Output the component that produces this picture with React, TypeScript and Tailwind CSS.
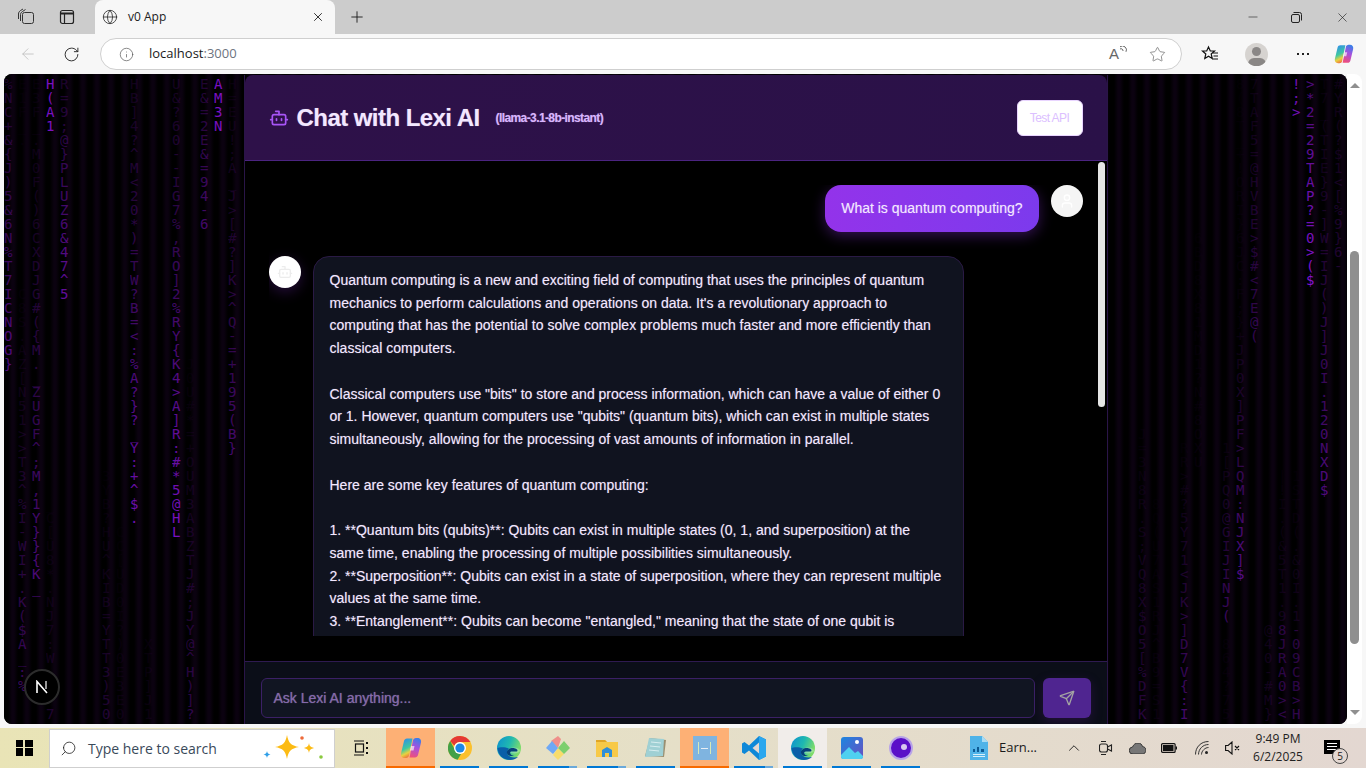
import { ArrowLeft, Bot, ChevronUp, Globe, Info, Minus, Plus, RotateCw, Search, Send, Star, User, X } from "lucide-react";

// [column, first row, characters, alpha at the top, alpha at the bottom]
type Trail = [number, number, string, number, number];

const trails: Trail[] = [
  [0, 0, "%NC+&{J)5&6N%T7ICNOG}", 0.28, 0.62],
  [1, 0, "E1F_.", 0.06, 0.08],
  [1, 15, "C8S.AZ[N51>>T3^%I-WI+.K($A_:%", 0.07, 0.5],
  [2, 0, "E3F_.M0F()6CXDJG#({M._ZUGF^;M,1Y}}{K_", 0.1, 0.62],
  [3, 0, "H(A1", 0.85, 0.85],
  [3, 30, "_C[U8*.NJ7:W", 0.08, 0.2],
  [3, 45, "7", 0.3, 0.3],
  [4, 0, "R=9;@}PLUZ6&47^5", 0.28, 0.72],
  [7, 28, "3YB?HU^KIB=YTT3)50", 0.06, 0.32],
  [8, 32, "CC[UD0I?)0E3E0", 0.05, 0.14],
  [9, 0, "HB]4?^M<20*)=TW?B=<:%A?}?_Y:+^$.", 0.2, 0.8],
  [10, 40, "XTP]J1", 0.1, 0.14],
  [12, 0, "U&?60--IG7%,RO]2%RY{K4>A]R:#*5@HL", 0.22, 0.85],
  [13, 20, "J0U#*=+OUM3ABZTJ#;JY@^H)]?", 0.06, 0.42],
  [14, 0, "E&=2E&=94-6", 0.32, 0.55],
  [15, 0, "AM3N", 0.85, 0.85],
  [16, 0, "H=EU!;A_J>[#?]K>^Q-=+195(B}", 0.12, 0.55],
  [81, 25, "J=3N8R.S;VQ8X$O5[%DFK", 0.08, 0.36],
  [82, 30, "8Q(U7AS1RJ^B9=S1", 0.05, 0.12],
  [84, 26, "RR>#?5Y71<JK>]D7V{:I", 0.06, 0.55],
  [85, 11, "6BD8X81MD1?N#8OXU", 0.05, 0.1],
  [87, 26, "1[PQ0@GIJINJ(", 0.12, 0.5],
  [87, 40, "864?75", 0.08, 0.1],
  [88, 0, "8(8T_+!ORI}6JC:F;}", 0.05, 0.1],
  [88, 18, "+JP0X]PF>LQM:NJX]$", 0.15, 0.65],
  [89, 0, "7TAF5=@HVBE>$#<7E@(", 0.14, 0.45],
  [90, 39, "@40-#M}", 0.18, 0.22],
  [91, 28, "|!I.(&5T1.9", 0.08, 0.2],
  [91, 39, "8JRA0><", 0.38, 0.42],
  [92, 0, "!;>", 0.8, 0.8],
  [92, 28, "1STD(.&0I.1", 0.06, 0.2],
  [92, 39, "-09CB>H", 0.38, 0.42],
  [93, 0, ">*2=29TAP?=0>($", 0.6, 0.9],
  [94, 0, "T7_(TIE}9-]W=IJ()J]J0I.120NXD$", 0.1, 0.62],
  [95, 0, "#YR(?$1<[%9}6-", 0.16, 0.32],
];

const Rain = () => (
  <div className="absolute inset-0 flex overflow-hidden bg-[repeating-linear-gradient(90deg,#000_0px,#000_4px,#0b0210_8px,#0b0210_10px,#000_14px)] pt-[3px] font-['DejaVu_Sans_Mono',monospace] text-[14px] leading-[14px]">
    {Array.from({ length: 96 }, (_, col) => {
      let row = 0;
      return (
        <div key={col} className="flex w-[14px] shrink-0 flex-col">
          {trails
            .filter((t) => t[0] === col)
            .map((t) => {
              const gap = t[1] - row;
              row = t[1] + t[2].length;
              return (
                <div key={t[1]} style={{ marginTop: gap * 14 }}>
                  {t[2].split("").map((c, i) => (
                    <div
                      key={i}
                      className="h-[14px]"
                      style={{
                        color: "#9a16f0",
                        opacity: Math.pow(t[3] + ((t[4] - t[3]) * i) / Math.max(t[2].length - 1, 1), 1.4),
                      }}
                    >
                      {c}
                    </div>
                  ))}
                </div>
              );
            })}
        </div>
      );
    })}
  </div>
);

const answer = `Quantum computing is a new and exciting field of computing that uses the principles of quantum mechanics to perform calculations and operations on data. It's a revolutionary approach to computing that has the potential to solve complex problems much faster and more efficiently than classical computers.

Classical computers use "bits" to store and process information, which can have a value of either 0 or 1. However, quantum computers use "qubits" (quantum bits), which can exist in multiple states simultaneously, allowing for the processing of vast amounts of information in parallel.

Here are some key features of quantum computing:

1. **Quantum bits (qubits)**: Qubits can exist in multiple states (0, 1, and superposition) at the same time, enabling the processing of multiple possibilities simultaneously.
2. **Superposition**: Qubits can exist in a state of superposition, where they can represent multiple values at the same time.
3. **Entanglement**: Qubits can become "entangled," meaning that the state of one qubit is`;

const ChatPanel = () => (
  <div className="relative z-10 mx-auto mt-px h-[700px] w-[864px] border-x border-[#2a1548] font-['Liberation_Sans',sans-serif] [text-shadow:0_0_1px_rgba(233,213,255,0.45)]">
    <div className="flex h-[86px] items-center justify-between rounded-t-lg border-b border-[#4b2480] bg-gradient-to-r from-[#2e1149] to-[#2a1148] px-6">
      <div className="flex items-center">
        <Bot size={20} strokeWidth={2} className="text-[#a855f7]" />
        <h1 className="ml-2 text-2xl font-bold tracking-[-0.55px] text-[#f3e8ff]">Chat with Lexi AI</h1>
        <span className="ml-4 text-xs font-bold tracking-[-0.6px] text-[#d8b4fe]">(llama-3.1-8b-instant)</span>
      </div>
      <button className="h-9 w-[66px] rounded-md border border-[#e9d5ff] bg-white text-xs tracking-[-0.55px] text-[#dcc0ff]">
        Test API
      </button>
    </div>

    <div className="relative flex h-[500px] flex-col bg-black px-6 pt-6 pb-[25px]">
      <div className="flex min-h-0 flex-1 flex-col gap-6 overflow-hidden">
        <div className="flex shrink-0 justify-end gap-3">
          <div className="rounded-2xl bg-gradient-to-r from-[#9333ea] to-[#7c3aed] px-4 py-3 text-sm leading-[22.75px] text-[#f3e8ff] shadow-[0_4px_14px_rgba(147,51,234,0.35)]">
            What is quantum computing?
          </div>
          <div className="flex h-8 w-8 items-center justify-center rounded-full bg-[#f5f5f5]">
            <User size={16} className="text-[#ffffff]" />
          </div>
        </div>
        <div className="flex shrink-0 gap-3">
          <div className="flex h-8 w-8 items-center justify-center rounded-full bg-white shadow-[0_4px_14px_rgba(147,51,234,0.25)]">
            <Bot size={16} className="text-[#ececec]" />
          </div>
          <div className="w-[651px] whitespace-pre-wrap rounded-2xl border border-[#2a1a45] bg-[#10131f] px-4 pt-3 pb-10 text-sm leading-[22.75px] text-[#f3e8ff]">
            {answer}
          </div>
        </div>
      </div>
      <div className="absolute top-[1px] right-[2px] h-[245px] w-[7px] rounded-full bg-[#e6e6e6]" />
    </div>

    <div className="flex h-[72px] gap-2 border-t border-[#2e1a50] bg-[#0b0e18] p-4">
      <div className="flex h-10 flex-1 items-center rounded-md border border-[#3b2066] bg-[#111522] px-3 text-sm text-[#8568ad]">
        Ask Lexi AI anything...
      </div>
      <button className="flex h-10 w-12 items-center justify-center rounded-md bg-[#4f2590] shadow-[0_4px_12px_rgba(88,28,135,0.3)]">
        <Send size={16} className="text-[#a3a3a3]" />
      </button>
    </div>
  </div>
);

const NextBadge = () => (
  <div className="absolute bottom-[19px] left-[20px] z-20 flex h-9 w-9 items-center justify-center rounded-full border-2 border-[#2c2c2c] bg-black">
    <svg width="14" height="14" viewBox="0 0 14 14" fill="none" stroke="#fff" strokeWidth="1.6">
      <path d="M2 13V1.5L12 13" />
      <path d="M11 1v8" stroke="#bdbdbd" />
    </svg>
  </div>
);

const Copilot = ({ size = 22, id = "a" }: { size?: number; id?: string }) => (
  <svg width={size} height={size} viewBox="0 0 24 24">
    <defs>
      <linearGradient id={`cp1${id}`} x1="0.3" y1="0" x2="0.6" y2="1">
        <stop offset="0" stopColor="#2f8fe8" />
        <stop offset="0.5" stopColor="#3fc8a0" />
        <stop offset="0.75" stopColor="#e8d23f" />
        <stop offset="1" stopColor="#f0663c" />
      </linearGradient>
      <linearGradient id={`cp2${id}`} x1="0.6" y1="0" x2="0.3" y2="1">
        <stop offset="0" stopColor="#3b7ee8" />
        <stop offset="0.45" stopColor="#a650e0" />
        <stop offset="1" stopColor="#ef4f7a" />
      </linearGradient>
    </defs>
    <path d="M8 2.500h5.500l-3.500 17c-.3 1.500-1.500 2.500-3 2.500H5.500C3 22 1.500 20 2 17.500L5 5c.4-1.600 1.500-2.500 3-2.500z" fill={`url(#cp1${id})`} />
    <path d="M16 21.500h-5.500l3.500-17C14.300 3 15.500 2 17 2h1.500C21 2 22.500 4 22 6.500L19 19c-.4 1.600-1.500 2.500-3 2.500z" fill={`url(#cp2${id})`} />
    <path d="M12 10h3.500l-1 4.500H11z" fill="#fff" opacity="0.65" />
  </svg>
);

const Chrome = () => (
  <svg width="24" height="24" viewBox="0 0 24 24">
    <circle cx="12" cy="12" r="12" fill="#fbc02d" />
    <path d="M12 0a12 12 0 0 1 10.400 6H12a6 6 0 0 0-5.600 3.800L2.200 5A12 12 0 0 1 12 0z" fill="#e53935" />
    <path d="M2.200 5l4.700 8.800a6 6 0 0 0 6.300 4L9.600 23.800A12 12 0 0 1 2.200 5z" fill="#43a047" />
    <circle cx="12" cy="12" r="6" fill="#fff" />
    <circle cx="12" cy="12" r="4.600" fill="#1e88e5" />
  </svg>
);

const Edge = ({ id = "a" }: { id?: string }) => (
  <svg width="24" height="24" viewBox="0 0 24 24">
    <defs>
      <linearGradient id={`eg${id}`} x1="0" y1="0" x2="1" y2="0.4">
        <stop offset="0" stopColor="#0c8fd0" />
        <stop offset="0.55" stopColor="#1fb8b0" />
        <stop offset="1" stopColor="#7ddc6a" />
      </linearGradient>
    </defs>
    <circle cx="12" cy="12" r="12" fill={`url(#eg${id})`} />
    <path d="M0.500 12C1 19 6 24 13 24c3 0 6-1 8-3-4 1-8 .5-10-2-1.500-2-1-5 1-6.500-5-2-10-1-11.500-.5z" fill="#0a5fa8" />
    <ellipse cx="17" cy="14.500" rx="6" ry="3" fill="#d8f0e0" opacity="0.35" />
    <path d="M12 13c2-1.500 6-1.500 8 .5.8.8.6 2-.6 2H15c-1.500 0-2.500 1-1.500 2.500.8 1 2 1.500 3.500 1.700-3 1-6 0-7-2.500-.6-1.500.5-3 2-4.200z" fill="#06407a" />
  </svg>
);

const TaskItem = ({ children, mark = "blue", bg = "", stack = false }: { children: React.ReactNode; mark?: "blue" | "orange" | "none"; bg?: string; stack?: boolean }) => (
  <div className={`relative flex h-10 w-[49px] shrink-0 items-center justify-center ${bg}`}>
    {children}
    {mark === "blue" && (
      <div className={`absolute right-[5px] bottom-0 left-[5px] h-[2px] ${stack ? "bg-gradient-to-r from-[#0078d4] from-[80%] to-[#6aa9db] to-[80%]" : "bg-[#0078d4]"}`} />
    )}
    {mark === "orange" && <div className="absolute inset-x-0 bottom-0 h-[2px] bg-[#f76a00]" />}
  </div>
);

const TabStrip = () => (
  <div className="flex h-[34px] shrink-0 items-end bg-[#cccccc] text-[#1a1a1a]">
    <div className="flex h-[34px] w-[95px] items-center pl-[17px]">
      <svg width="18" height="18" viewBox="0 0 18 18" fill="none" stroke="#333" strokeWidth="1">
        <rect x="5.500" y="4.500" width="11" height="11" rx="2" />
        <path d="M3.500 13V6.500c0-1 .5-2 2-3l3-2M1.500 11V6c0-1.500 .7-2.500 2-3.500l2.500-1.500" />
      </svg>
      <svg className="ml-6" width="16" height="16" viewBox="0 0 16 16" fill="none" stroke="#222" strokeWidth="1.200">
        <rect x="1.500" y="1.500" width="13" height="13" rx="2" />
        <path d="M1.500 4.500h13" strokeWidth="2" />
        <path d="M5.500 4.500v10" />
      </svg>
    </div>
    <div className="flex h-[34px] w-[240px] items-center rounded-t-lg bg-[#f7f7f7] pr-[10px] pl-[7px]">
      <Globe size={16} strokeWidth={1.3} className="text-[#333]" />
      <span className="ml-[10px] flex-1 font-['Open_Sans',sans-serif] text-[12px] text-[#222]">v0 App</span>
      <X size={14} strokeWidth={1.5} />
    </div>
    <div className="flex h-[34px] flex-1 items-center pl-[13px]">
      <Plus size={18} strokeWidth={1.200} />
      <div className="ml-auto flex items-center">
        <Minus size={14} strokeWidth={1} className="mr-[31px]" />
        <svg className="mr-[33px]" width="11" height="11" viewBox="0 0 11 11" fill="none" stroke="#222">
          <rect x="0.500" y="2.500" width="8" height="8" rx="1.500" />
          <path d="M2.500 .5h6a2 2 0 0 1 2 2v6" />
        </svg>
        <X size={15} strokeWidth={1} className="mr-[16px]" />
      </div>
    </div>
  </div>
);

const ToolBar = () => (
  <div className="flex h-10 shrink-0 items-center bg-[#f7f7f7] font-['Open_Sans',sans-serif]">
    <ArrowLeft size={18} strokeWidth={1} className="ml-[19px] text-[#b8b8b8]" />
    <RotateCw size={17} strokeWidth={1.300} className="ml-[26px] text-[#222]" />
    <div className="ml-5 flex h-8 w-[1082px] items-center rounded-full border border-[#cfcfcf] bg-white pr-[15px] pl-[18px]">
      <Info size={15} strokeWidth={1.100} className="text-[#555]" />
      <span className="ml-[15px] text-[13px] text-[#1a1a1a]">
        localhost<span className="text-[#6d7480]">:3000</span>
      </span>
      <div className="ml-auto flex items-center gap-[22px] text-[#666]">
        <span className="relative flex h-4 w-[18px] items-center font-['Liberation_Sans',sans-serif] text-[15px]">
          A
          <svg className="absolute top-0 right-0" width="8" height="8" viewBox="0 0 8 8" fill="none" stroke="#666">
            <path d="M1 3a2 2 0 0 1 3 2M1 .8a4 4 0 0 1 6 5" />
          </svg>
        </span>
        <Star size={17} strokeWidth={1} />
      </div>
    </div>
    <svg className="ml-[19px]" width="18" height="18" viewBox="0 0 18 18" fill="none" stroke="#111" strokeWidth="1.200">
      <path d="M7.500 2l1.800 4h4.200l-3.300 3 1 4.500-3.700-2.300L3.800 13.500l1-4.500L1.500 6h4.200z" />
      <path d="M12 8h5M12.500 11h4.500M11.500 14h5.500" />
    </svg>
    <div className="relative ml-[26px] flex h-[23px] w-[23px] items-center justify-center overflow-hidden rounded-full bg-[#d6d3d0]">
      <div className="absolute top-[4px] h-[9px] w-[9px] rounded-full bg-[#8a8786]" />
      <div className="absolute top-[15px] h-3 w-[18px] rounded-full bg-[#8a8786]" />
    </div>
    <div className="ml-[29px] flex gap-[3px]">
      <div className="h-[2px] w-[2px] bg-[#222]" />
      <div className="h-[2px] w-[2px] bg-[#222]" />
      <div className="h-[2px] w-[2px] bg-[#222]" />
    </div>
    <div className="ml-6">
      <Copilot id="top" />
    </div>
  </div>
);

const TaskBar = () => (
  <div className="flex h-10 shrink-0 items-center bg-gradient-to-r from-[#e9e4b6] via-[#e5dfc8] to-[#e3d7d1] font-['Open_Sans',sans-serif] text-[#1a1a1a]">
    <div className="flex h-10 w-[49px] items-center justify-center">
      <div className="grid grid-cols-2 gap-[1px]">
        <div className="h-[7px] w-[7px] bg-black" />
        <div className="h-[7px] w-[8px] bg-black" />
        <div className="h-[8px] w-[7px] bg-black" />
        <div className="h-[8px] w-[8px] bg-black" />
      </div>
    </div>
    <div className="flex h-[39px] w-[286px] items-center border border-[#cfcfcf] bg-white pl-[10px]">
      <Search size={17} strokeWidth={1.100} className="-scale-x-100" />
      <span className="ml-[11px] text-[14px] text-[#3a4a5a]">Type here to search</span>
      <svg className="ml-[46px]" width="62" height="28" viewBox="0 0 62 28">
        <path d="M24 1c1.500 8 4 10.500 12 12-8 1.500-10.500 4-12 12-1.500-8-4-10.500-12-12 8-1.500 10.500-4 12-12z" fill="#fcbb14" />
        <path d="M46 9c.5 3 1.500 4 5 5-3.500 1-4.500 2-5 5-.5-3-1.500-4-5-5 3.500-1 4.500-2 5-5z" fill="#fcbb14" />
        <path d="M4 17c.3 2 1 3 3.500 3.500-2.500.5-3.200 1.500-3.500 3.500-.3-2-1-3-3.500-3.500 2.500-.5 3.200-1.500 3.500-3.500z" fill="#2f9fe8" />
        <circle cx="39" cy="4" r="1.800" fill="#ee6a3a" />
        <circle cx="58" cy="23" r="1.800" fill="#8ac93f" />
      </svg>
    </div>
    <div className="flex h-10 w-[51px] items-center justify-center">
      <svg width="16" height="16" viewBox="0 0 16 16" fill="none" stroke="#111" strokeWidth="1.200">
        <path d="M1 1h10M1 15h10" />
        <rect x="2.500" y="4" width="8" height="8" />
        <path d="M14 2v2M14 7v2M14 12v2" strokeWidth="2" />
      </svg>
    </div>
    <TaskItem mark="orange" bg="bg-[#fdb075]">
      <Copilot size={24} id="bar" />
    </TaskItem>
    <TaskItem>
      <Chrome />
    </TaskItem>
    <TaskItem>
      <Edge id="one" />
    </TaskItem>
    <TaskItem stack>
      <svg width="24" height="24" viewBox="0 0 24 24">
        <path d="M12 12L5 5l7-5 3 3z" fill="#ef8f8a" />
        <path d="M12 12l-5 7 5 5 6-6z" fill="#f8dc6c" />
        <path d="M0 12l6-7 6 7-5 6z" fill="#6ea8f5" />
        <path d="M12 12l6-7 6 7-6 6z" fill="#7ccf6e" />
      </svg>
    </TaskItem>
    <TaskItem stack>
      <svg width="22" height="20" viewBox="0 0 22 20">
        <path d="M0 2h9l2 2h11v15H0z" fill="#f7c948" />
        <path d="M0 2h9l2 2H0z" fill="#e0a526" />
        <path d="M6 19v-7l5-3 5 3v7h-3v-4H9v4z" fill="#2f8fd8" />
      </svg>
    </TaskItem>
    <TaskItem>
      <svg width="23" height="22" viewBox="0 0 23 22">
        <path d="M6 1l16 2-2 17-19-1z" fill="#9a8f70" />
        <path d="M5 1l15 1-1 17-18 1z" fill="#9fd0d4" />
        <path d="M7 5l10 1M6 9l10 1M5 13l10 1" stroke="#d8eef0" />
      </svg>
    </TaskItem>
    <TaskItem mark="orange" bg="bg-[#fdb075]">
      <div className="flex h-6 w-6 items-center justify-center gap-[2px] bg-[#7fb4e0]">
        <div className="h-3 w-px bg-[#d6e8b8]" />
        <div className="h-px w-[7px] bg-[#e8eef4]" />
        <div className="h-3 w-px bg-[#d6e8b8]" />
      </div>
    </TaskItem>
    <TaskItem stack>
      <svg width="24" height="24" viewBox="0 0 24 24">
        <path d="M17 0l7 3.500v17L17 24 7 14.500 2.500 18 0 16.500V7.500L2.500 6 7 9.500z" fill="#0e88d8" />
        <path d="M17 6.500L10.500 12l6.500 5.500z" fill="#e3d7d1" />
        <path d="M17 0l7 3.500v17L17 24z" fill="#2ba7ee" />
      </svg>
    </TaskItem>
    <TaskItem bg="bg-[#f1edea]">
      <Edge id="two" />
    </TaskItem>
    <TaskItem>
      <svg width="22" height="22" viewBox="0 0 22 22">
        <defs>
          <linearGradient id="ph" x1="0" y1="0" x2="1" y2="1">
            <stop offset="0" stopColor="#1c86e0" />
            <stop offset="1" stopColor="#6b4fc0" />
          </linearGradient>
        </defs>
        <rect width="22" height="22" rx="3" fill="url(#ph)" />
        <path d="M0 18l8-8 6 6 3-2 5 5v1a2 2 0 0 1-2 2H2a2 2 0 0 1-2-2z" fill="#4fd0f0" />
        <circle cx="16" cy="5" r="2" fill="#fff" />
      </svg>
    </TaskItem>
    <TaskItem>
      <div className="flex h-6 w-6 items-center justify-center rounded-full border-2 border-[#b8a4e8] bg-[#5a10c8]">
        <div className="-mt-[3px] ml-[6px] h-[6px] w-[6px] rounded-full bg-[#d8c8f0]" />
      </div>
    </TaskItem>
    <div className="ml-[45px] flex w-[70px] items-center gap-[11px]">
      <svg width="18" height="24" viewBox="0 0 18 24">
        <path d="M0 0h12l6 6v18H0z" fill="#4fb3e8" />
        <path d="M12 0l6 6h-6z" fill="#a8dcf4" />
        <path d="M3 13h2v3H3zM7 11h2v5H7zM11 13h3v3h-3z" fill="#0c5a94" />
        <path d="M3 18h12v1H3zM3 20h12v1H3z" fill="#d8f0fa" />
      </svg>
      <span className="text-[13px]">Earn...</span>
    </div>
    <div className="ml-[25px] flex items-center">
      <ChevronUp size={18} strokeWidth={1.200} />
      <svg className="ml-4" width="14" height="16" viewBox="0 0 14 16" fill="none" stroke="#222" strokeWidth="1.100">
        <rect x="0.500" y="4" width="8" height="8" rx="2" />
        <path d="M8.500 7l4-2v6l-4-2M2 1.500h5M2 14.500h5" />
      </svg>
      <svg className="ml-[16px]" width="17" height="11" viewBox="0 0 17 11">
        <path d="M4 11a3.500 3.500 0 0 1-.5-7C4.500 1.500 6.500 0 9 0c2.500 0 4 1.500 4.500 3.500 2 .2 3.500 1.700 3.500 3.700S15.500 11 13.500 11z" fill="#777" stroke="#222" strokeWidth="0.800" />
      </svg>
      <svg className="ml-[15px]" width="16" height="10" viewBox="0 0 16 10">
        <rect x="0.600" y="0.600" width="13.500" height="8.800" rx="1" fill="none" stroke="#111" strokeWidth="1.200" />
        <rect x="2" y="2" width="10.500" height="6" fill="#111" />
        <rect x="14.600" y="3.500" width="1.400" height="3" fill="#111" />
      </svg>
      <svg className="ml-[18px]" width="15" height="14" viewBox="0 0 15 14" fill="none" stroke="#333">
        <path d="M.5 13.500C.5 6 6 .5 13.500 .5M3.500 13.500C3.500 8 8 3.500 13.500 3.500M6.500 13.500C6.500 10 10 6.500 13.500 6.500" />
        <circle cx="11.500" cy="11.500" r="1.500" fill="#222" stroke="none" />
      </svg>
      <svg className="ml-[15px]" width="15" height="14" viewBox="0 0 15 14" fill="none" stroke="#111" strokeWidth="1.100">
        <path d="M.6 4.500h2.500L7 1v12L3.100 9.500H.6zM10 5l4 4M14 5l-4 4" />
      </svg>
      <div className="ml-[5px] flex w-[66px] flex-col items-center text-[12px] leading-[18px] text-[#222]">
        <span>9:49 PM</span>
        <span>6/2/2025</span>
      </div>
      <div className="relative ml-[9px] h-10 w-[24px]">
        <div className="absolute top-[12px] left-[4px] h-[14px] w-[16px] bg-black">
          <div className="mx-[3px] mt-[3px] h-px bg-white" />
          <div className="mx-[3px] mt-[2px] h-px bg-white" />
          <div className="mx-[3px] mt-[2px] h-px bg-white" />
        </div>
        <div className="absolute top-[20px] left-[12px] flex h-4 w-4 items-center justify-center rounded-full border border-[#444] bg-[#e3d7d1] text-[10px] leading-none">
          5
        </div>
      </div>
    </div>
  </div>
);

export default function App() {
  return (
    <div className="flex h-[768px] w-[1366px] flex-col overflow-hidden bg-[#f7f7f7]">
      <TabStrip />
      <ToolBar />
      <div className="flex h-[650px] shrink-0 pl-1">
        <div className="relative w-[1343px] overflow-hidden rounded-lg bg-black">
          <Rain />
          <ChatPanel />
          <NextBadge />
        </div>
        <div className="flex w-[15px] flex-col items-center justify-between rounded-r-lg bg-white py-[9px]">
          <div className="h-0 w-0 border-x-[5px] border-b-[5px] border-x-transparent border-b-[#8f8f8f]" />
          <div className="mt-[163px] mb-[66px] w-[9px] flex-1 rounded-full bg-[#8f8f8f]" />
          <div className="h-0 w-0 border-x-[5px] border-t-[5px] border-x-transparent border-t-[#8f8f8f]" />
        </div>
      </div>
      <div className="h-1 shrink-0" />
      <TaskBar />
    </div>
  );
}
